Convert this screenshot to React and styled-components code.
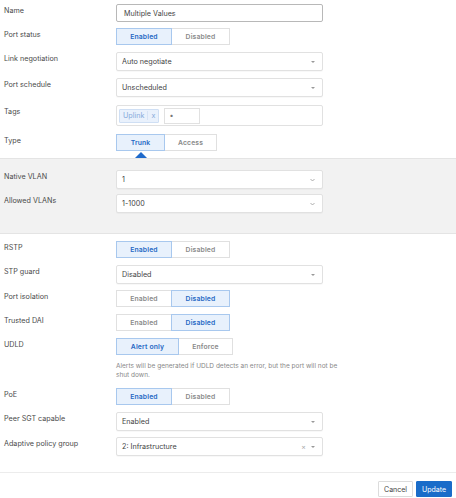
import React from "react";
import styled, { createGlobalStyle } from "styled-components";

const Global = createGlobalStyle`
  body {
    margin: 0;
    background: #fff;
    font-family: Inter, "Noto Sans", sans-serif;
    color: #333;
  }
`;

const Page = styled.div`
  width: 456px;
  height: 498px;
  box-sizing: border-box;
  padding-top: 4px;
  font-size: 7.2px;
`;

const Row = styled.div`
  display: grid;
  grid-template-columns: 112px 207px;
  align-items: start;
  padding-left: 4px;
  margin-bottom: ${p => p.gap ?? 7}px;
`;

const Label = styled.div`
  padding-top: 2px;
  color: #4a4a4a;
  font-size: 7.2px;
`;

const Control = styled.div`
  grid-column: 2;
  position: relative;
`;

const TextInput = styled.div`
  height: 18px;
  box-sizing: border-box;
  border: 1px solid #b8b8b8;
  border-radius: 2px;
  padding: 0 7px;
  display: flex;
  align-items: center;
  color: #444;
  background: #fff;
`;

const SelectBox = styled.div`
  height: 19px;
  box-sizing: border-box;
  border: 1px solid #e1e1e1;
  border-radius: 2px;
  padding: 0 5px;
  display: flex;
  align-items: center;
  background: #fff;
  color: #444;
  box-shadow: 0 1px 1px rgba(0, 0, 0, 0.03);
  span {
    flex: 1;
  }
`;

const Caret = styled.i`
  width: 0;
  height: 0;
  border-left: 2.5px solid transparent;
  border-right: 2.5px solid transparent;
  border-top: 2px solid #999;
  margin-right: 2px;
`;

const Chevron = styled.svg`
  width: 5px;
  height: 4px;
  margin-right: 2px;
`;

const Clear = styled.b`
  font-weight: normal;
  color: #aaa;
  font-size: 7px;
  margin-right: 5px;
`;

const Segments = styled.div`
  display: inline-flex;
  height: 17px;
`;

const Segment = styled.div`
  box-sizing: border-box;
  height: 17px;
  width: ${p => p.w}px;
  display: flex;
  align-items: center;
  justify-content: center;
  font-weight: 600;
  font-size: 6.8px;
  letter-spacing: 0.15px;
  border: 1px solid ${p => (p.on ? "#a8c8ee" : "#e0e0e0")};
  background: ${p => (p.on ? "#e8f1fc" : "#fff")};
  color: ${p => (p.on ? "#2568c4" : "#8a8a8a")};
  margin-left: ${p => (p.first ? 0 : -1)}px;
  position: relative;
  z-index: ${p => (p.on ? 1 : 0)};
`;

const Pointer = styled.i`
  position: absolute;
  left: 18px;
  top: 17px;
  width: 0;
  height: 0;
  border-left: 6px solid transparent;
  border-right: 6px solid transparent;
  border-bottom: 6px solid #1f6acb;
`;

const TagBox = styled.div`
  height: 21px;
  box-sizing: border-box;
  border: 1px solid #e1e1e1;
  border-radius: 2px;
  display: flex;
  align-items: center;
  padding: 0 2px;
  gap: 5px;
`;

const Chip = styled.div`
  display: flex;
  align-items: center;
  height: 14px;
  box-sizing: border-box;
  border: 1px solid #cfdff4;
  background: #e9f1fc;
  color: #86aadb;
  border-radius: 1px;
  span {
    padding: 0 3px;
  }
  span + span {
    border-left: 1px solid #d6e3f5;
  }
`;

const TagInput = styled.div`
  width: 36px;
  height: 16px;
  box-sizing: border-box;
  border: 1px solid #e1e1e1;
  display: flex;
  align-items: center;
  padding-left: 4px;
  color: #777;
`;

const VlanPanel = styled.div`
  background: #f2f2f2;
  border-top: 1px solid #e4e4e4;
  border-bottom: 1px solid #e4e4e4;
  padding: 11px 0 20px;
  margin-bottom: 7px;
`;

const Help = styled.p`
  margin: 0;
  width: 236px;
  color: #888;
  font-size: 6.5px;
  line-height: 8.5px;
`;

const Footer = styled.div`
  border-top: 1px solid #ececec;
  margin-top: 16px;
  padding: 8px 4px 0 0;
  display: flex;
  justify-content: flex-end;
  gap: 3px;
`;

const Button = styled.div`
  height: 16px;
  padding: 0 5px;
  box-sizing: border-box;
  display: flex;
  align-items: center;
  font-size: 7px;
  border-radius: 1px;
  border: 1px solid ${p => (p.primary ? "#1a6cc9" : "#dcdcdc")};
  background: ${p => (p.primary ? "#1a6cc9" : "#fff")};
  color: ${p => (p.primary ? "#fff" : "#444")};
`;

const Toggle = ({ items, active, widths, pointer }) => (
  <Segments>
    {items.map((t, i) => (
      <Segment key={t} first={i === 0} on={i === active} w={widths[i]}>
        {t}
        {pointer && i === active && <Pointer />}
      </Segment>
    ))}
  </Segments>
);

const Select = ({ value, chevron, clear }) => (
  <SelectBox>
    <span>{value}</span>
    {clear && <Clear>×</Clear>}
    {chevron ? (
      <Chevron viewBox="0 0 5 4">
        <path d="M0.5 1 L2.5 3 L4.5 1" fill="none" stroke="#999" strokeWidth="0.8" />
      </Chevron>
    ) : (
      <Caret />
    )}
  </SelectBox>
);

const Field = ({ label, gap, children }) => (
  <Row gap={gap}>
    <Label>{label}</Label>
    <Control>{children}</Control>
  </Row>
);

const onOff = ["Enabled", "Disabled"];
const onOffW = [56, 59];

export default function App() {
  return (
    <Page>
      <Global />
      <Field label="Name" gap={6}>
        <TextInput>Multiple Values</TextInput>
      </Field>
      <Field label="Port status" gap={7}>
        <Toggle items={onOff} active={0} widths={onOffW} />
      </Field>
      <Field label="Link negotiation">
        <Select value="Auto negotiate" />
      </Field>
      <Field label="Port schedule" gap={8}>
        <Select value="Unscheduled" />
      </Field>
      <Field label="Tags" gap={8}>
        <TagBox>
          <Chip>
            <span>Uplink</span>
            <span>x</span>
          </Chip>
          <TagInput>•</TagInput>
        </TagBox>
      </Field>
      <Field label="Type" gap={7}>
        <Toggle items={["Trunk", "Access"]} active={0} widths={[49, 53]} pointer />
      </Field>
      <VlanPanel>
        <Field label="Native VLAN" gap={5}>
          <Select value="1" chevron />
        </Field>
        <Field label="Allowed VLANs" gap={0}>
          <Select value="1-1000" chevron />
        </Field>
      </VlanPanel>
      <Field label="RSTP">
        <Toggle items={onOff} active={0} widths={onOffW} />
      </Field>
      <Field label="STP guard" gap={6}>
        <Select value="Disabled" />
      </Field>
      <Field label="Port isolation">
        <Toggle items={onOff} active={1} widths={onOffW} />
      </Field>
      <Field label="Trusted DAI">
        <Toggle items={onOff} active={1} widths={onOffW} />
      </Field>
      <Field label="UDLD" gap={7}>
        <Toggle items={["Alert only", "Enforce"]} active={0} widths={[63, 55]} />
      </Field>
      <Field label="" gap={9}>
        <Help>
          Alerts will be generated if UDLD detects an error, but the port will not be
          shut down.
        </Help>
      </Field>
      <Field label="PoE">
        <Toggle items={onOff} active={0} widths={onOffW} />
      </Field>
      <Field label="Peer SGT capable" gap={6}>
        <Select value="Enabled" />
      </Field>
      <Field label="Adaptive policy group" gap={0}>
        <Select value="2: Infrastructure" clear />
      </Field>
      <Footer>
        <Button>Cancel</Button>
        <Button primary>Update</Button>
      </Footer>
    </Page>
  );
}
